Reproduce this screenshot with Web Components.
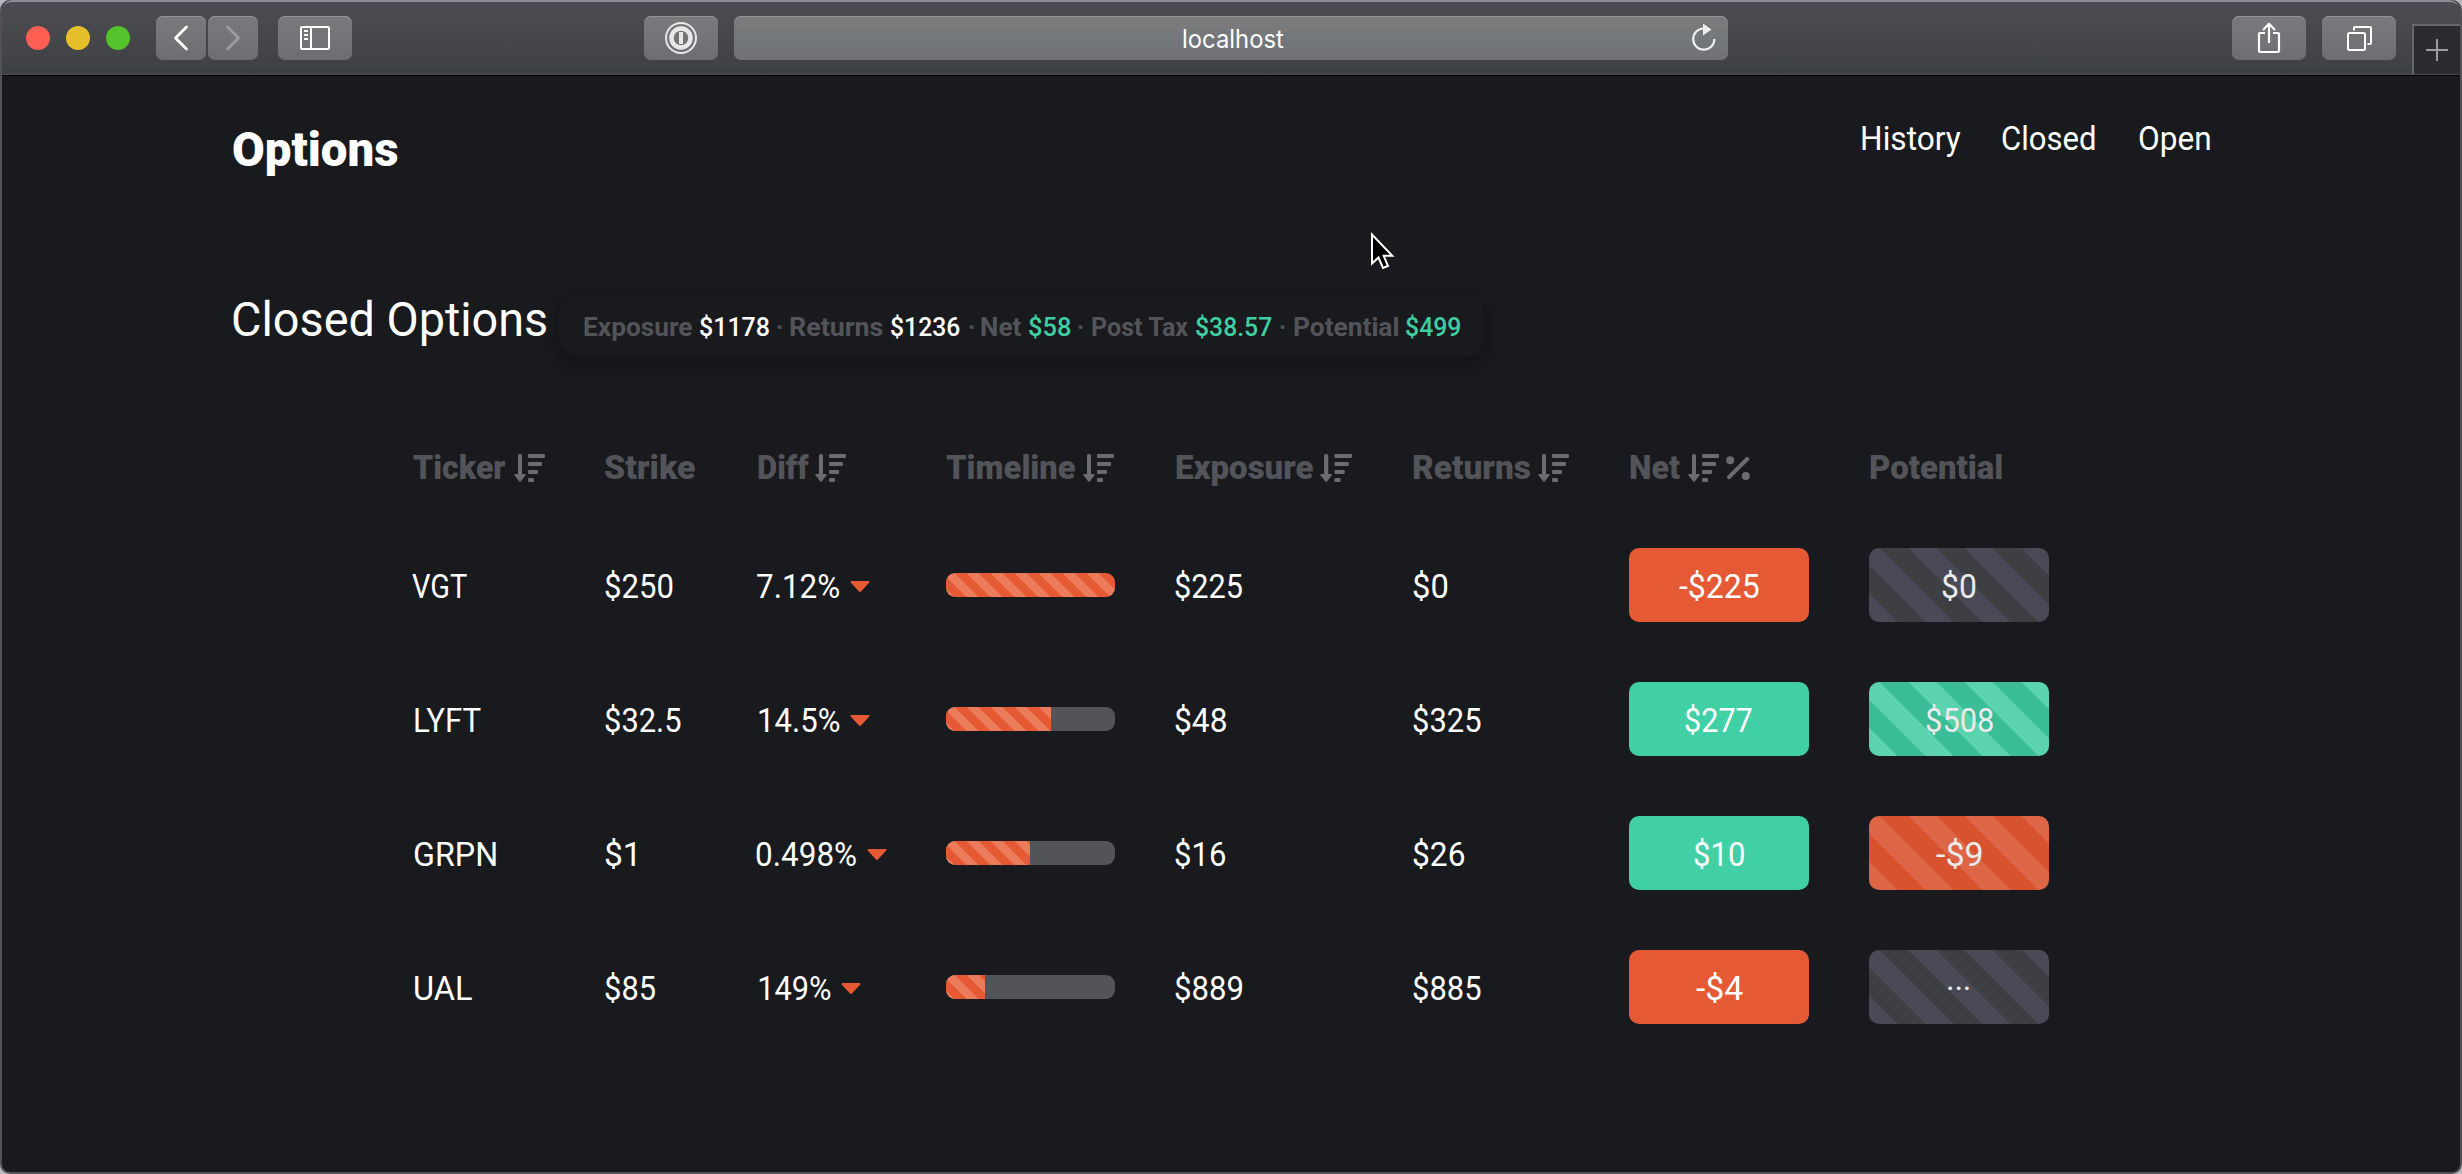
<!DOCTYPE html>
<html lang="en">
<head>
<meta charset="utf-8">
<title>Options</title>
<style>
html,body{margin:0;height:100%;background:#b9babd;overflow:hidden}
body{font-family:Roboto,"Liberation Sans",sans-serif;color:#fff}
</style>
</head>
<body>
<options-app></options-app>
<script>
const define = (name, css, html, setup) => customElements.define(name, class extends HTMLElement {
  connectedCallback() {
    if (this.shadowRoot) return;
    const root = this.attachShadow({ mode: 'open' });
    root.innerHTML = `<style>:host,*{box-sizing:border-box}${css}</style>${typeof html === 'function' ? html(this) : html}`;
    if (setup) setup(this, root);
  }
});

/* Text whose inked width is set by the "w" attribute. */
const pen = document.createElement('canvas').getContext('2d');
define('fit-text',
  `:host{display:block;flex:none;white-space:pre}
   span{display:inline-block;transform-origin:0 50%}`,
  '<span><slot></slot></span>',
  (el, root) => {
    const w = +el.getAttribute('w'), cs = getComputedStyle(el);
    pen.font = `${cs.fontWeight} ${cs.fontSize} ${cs.fontFamily}`;
    const m = pen.measureText(el.textContent);
    const k = w / (m.actualBoundingBoxRight + m.actualBoundingBoxLeft);
    el.style.width = w + 'px';
    root.querySelector('span').style.transform = `translateX(${m.actualBoundingBoxLeft * k}px) scaleX(${k})`;
  });
const t = (s, w, ml = 0, cls = '') => `<fit-text w="${w}" class="${cls}" style="margin-left:${ml}px">${s}</fit-text>`;

define('tool-button',
  `:host{display:flex;flex:none;align-items:center;justify-content:center;height:44px;border-radius:7px;
   background:linear-gradient(#77797b,#737578 50%,#6c6d71);box-shadow:inset 0 1px #929396}`,
  '<slot></slot>', el => { el.style.width = el.getAttribute('w') + 'px'; });

define('window-toolbar',
  `:host{display:flex;align-items:flex-start;height:76px;border-top:2px solid #8d8e91;border-bottom:1px solid #000;
     padding:14px 0 0 24px;background:linear-gradient(#4c4c54,#464749 50%,#3d4045 97%,#4a4c50);border-radius:10px 10px 0 0}
   svg{display:block;fill:none;stroke:#fff}
   .light{width:24px;height:24px;border-radius:50%;margin:10px 16px 0 0}
   .url{display:flex;align-items:center;flex:none;width:994px;height:44px;margin-left:16px;border-radius:7px;padding-top:2px;
     background:linear-gradient(#7b7c7d,#737679 60%,#717275);box-shadow:inset 0 1px #929396;
     font:400 25.5px/44px Inter,"Liberation Sans",sans-serif}
   .new{width:48px;height:50px;margin:8px 0 0 16px;background:#2b2c30;border:solid #65676a;border-width:2px 0 0 2px;display:flex;align-items:center;justify-content:center}`,
  `<div class="light" style="background:#ff5f52"></div><div class="light" style="background:#e6c02a"></div><div class="light" style="background:#54c22b;margin-right:26px"></div>
   <tool-button w="50"><svg width="16" height="26" viewBox="0 0 16 26" stroke-width="2.8" stroke-linecap="round" stroke-linejoin="round"><path d="M13.5 2 2.5 13 13.5 24"/></svg></tool-button>
   <tool-button w="50" style="margin-left:2px"><svg width="16" height="26" viewBox="0 0 16 26" stroke-width="2.8" stroke-linecap="round" stroke-linejoin="round" style="stroke:#9c9da0"><path d="M2.5 2 13.5 13 2.5 24"/></svg></tool-button>
   <tool-button w="74" style="margin-left:20px"><svg width="30" height="24" viewBox="0 0 30 24" stroke-width="2"><rect x="1" y="1" width="28" height="22" rx="1"/><path d="M11 1v22M4 5h4M4 9h4M4 13h4"/></svg></tool-button>
   <tool-button w="74" style="margin-left:292px"><svg width="34" height="34" viewBox="0 0 34 34" style="stroke:#e8e8e9"><circle cx="17" cy="17" r="15" stroke-width="2"/><circle cx="17" cy="17" r="9.5" stroke-width="4.5"/><path d="M17 11v12" stroke-width="4"/></svg></tool-button>
   <div class="url">${t('localhost', 100.5, 449)}
     <svg style="margin:-3px 0 0 407px" width="26" height="30" viewBox="0 0 26 30"><path d="M12.5 5.5A10.6 10.6 0 1 0 23.4 16" stroke="#eee" stroke-width="2.2"/><path d="M12 .5 20.5 6.5 12 12.5z" fill="#eee" stroke="none"/></svg></div>
   <tool-button w="74" style="margin-left:504px"><svg width="24" height="32" viewBox="0 0 24 32" stroke-width="2.2" stroke-linejoin="round"><path d="M8 11H3Q2 11 2 12V29Q2 30 3 30H21Q22 30 22 29V12Q22 11 21 11H16M12 21V2M6 8 12 1.8 18 8"/></svg></tool-button>
   <tool-button w="74" style="margin-left:16px"><svg width="26" height="26" viewBox="0 0 26 26" stroke-width="2"><rect x="2" y="8" width="17" height="17" rx="1.5"/><path d="M8 5.500V2.500Q8 2 9 2H24Q25 2 25 3V18Q25 19 24 19H21.500"/></svg></tool-button>
   <div class="new"><svg width="24" height="24" viewBox="0 0 24 24" stroke-width="2" style="stroke:#9c9da0"><path d="M12 1v22M1 12h22"/></svg></div>`);

define('page-header',
  `:host{display:flex;align-items:flex-start;height:215px;padding:45px 250.700px 0 232.500px}
   h1{margin:1px 0 0;font:900 48px/56px Roboto,sans-serif}
   nav{display:flex;margin-left:auto;font-size:33px;line-height:40px;margin-top:-2px}`,
  `<h1>${t('Options', 165)}</h1><nav>${t('History', 99)}${t('Closed', 93, 41)}${t('Open', 70.500, 43.500)}</nav>`);

define('summary-bar',
  `:host{display:flex;align-items:flex-start;height:163px;padding-left:233px}
   h2{margin:1px 0 0;font:400 48px/56px Roboto,sans-serif}
   .card{display:flex;width:925.500px;height:62px;margin:3px 0 0 12.500px;padding:4px 0 0 25.300px;border-radius:20px;
     font:700 26px/58px Roboto,sans-serif;color:#535459;box-shadow:0 8px 22px rgba(0,0,0,.32);background:#191a1e}
   .v{color:#fff;font-weight:500}.g{color:#3fcda2;font-weight:500}`,
  `<h2>${t('Closed Options', 313.500)}</h2><div class="card">${
    t('Exposure', 108.500) + t('$1178', 69.200, 7.600, 'v') + t('·', 4.500, 7.500) +
    t('Returns', 93, 8.500) + t('$1236', 68.500, 8, 'v') + t('·', 4.500, 9) +
    t('Net', 40.500, 8.300) + t('$58', 41.700, 7, 'g') + t('·', 4.500, 7.400) +
    t('Post Tax', 97.500, 9.200) + t('$38.57', 75.500, 7.200, 'g') + t('·', 4.500, 8.500) +
    t('Potential', 104.500, 9) + t('$499', 54.700, 7.300, 'g')}</div>`);

define('sort-icon',
  `:host{display:block;flex:none;fill:#6b6c70}svg{display:block}`,
  el => `<svg width="${el.getAttribute('w') || 31}" height="28" viewBox="0 0 31 28" preserveAspectRatio="none"><rect x="4" width="4" height="23" rx="1.5"/><path d="M1.200 20H10.800Q12.200 20 11.500 21.200L7 27.300Q6 28.300 5 27.300L.5 21.200Q-.2 20 1.200 20z"/><rect x="14" width="17" height="4" rx="1.200"/><rect x="14" y="8" width="14" height="4" rx="1.200"/><rect x="14" y="16" width="10" height="4" rx="1.200"/><rect x="14" y="24" width="6" height="4" rx="1.200"/></svg>`);

define('percent-icon',
  `:host{display:block;flex:none}svg{display:block}`,
  `<svg width="24" height="25" viewBox="0 0 24 25" fill="#6b6c70"><circle cx="4.200" cy="4.200" r="4"/><circle cx="19.800" cy="20" r="4"/><path d="M21.200 3 3 21.200" stroke="#6b6c70" stroke-width="4" stroke-linecap="round"/></svg>`);

define('time-bar',
  `:host{display:block;width:169px;height:24px;border-radius:9px;overflow:hidden;background:#535458}
   div{height:100%;background:linear-gradient(45deg,#ec7b5c 25%,#e55a34 25%,#e55a34 50%,#ec7b5c 50%,#ec7b5c 75%,#e55a34 75%) -3px 0/24px 24px}`,
  el => `<div style="width:${el.getAttribute('fill')}px"></div>`);

define('value-pill',
  `:host{display:flex;width:180px;height:74px;padding-top:3px;border-radius:10px;align-items:center;justify-content:center;background:#e55a34}
   :host([tone=up]){background:#41d0a5}
   :host([striped]){color:#ebebec;background:repeating-linear-gradient(45deg,var(--a) 0 20px,var(--b) 20px 40px)}
   :host([striped][tone=flat]){--a:#494a55;--b:#3d3f42}
   :host([striped][tone=up]){--a:#5bd3ae;--b:#3bbd97}
   :host([striped][tone=down]){--a:#dd6646;--b:#d7532f}`,
  '<slot></slot>');

define('options-table',
  `:host{display:block;padding-left:412px;font-size:33px;line-height:40px}
   .row{display:grid;grid-template-columns:192px 152px 190px 228px 238px 217px 240px 180px;height:134px;align-items:center}
   .head{height:64px;color:#535459;font-weight:900;align-items:start}
   .cell{display:flex;align-items:center}
   .row:not(.head) .cell{padding-top:3px}
   .head .cell{height:28px}
   .caret{display:block;flex:none}`,
  () => {
    const cell = s => `<div class="cell">${s}</div>`;
    const head = [
      t('Ticker', 93, .5) + '<sort-icon style="margin-left:8px"></sort-icon>',
      t('Strike', 90.500, .8),
      t('Diff', 50.500, 1.800) + '<sort-icon style="margin-left:7.200px"></sort-icon>',
      t('Timeline', 129.500, 0) + '<sort-icon style="margin-left:7px"></sort-icon>',
      t('Exposure', 137.500, 2) + '<sort-icon w="32" style="margin-left:6px"></sort-icon>',
      t('Returns', 117, 1) + '<sort-icon style="margin-left:7.500px"></sort-icon>',
      t('Net', 49.600, 1.300) + '<sort-icon style="margin-left:8px"></sort-icon><percent-icon style="margin-left:7px"></percent-icon>',
      t('Potential', 132.300, 1.300)
    ];
    const caret = '<svg class="caret" style="margin-left:10.500px" width="20" height="11" viewBox="0 0 20 11"><path fill="#e55a34" d="M1.500 0H18.500Q20 .3 19.300 1.600L11 10.500Q10 11.400 9 10.500L.7 1.600Q0 .3 1.500 0z"/></svg>';
    const rows = [
      [['VGT', 54.700, .3], ['$250', 67.500], ['7.12%', 82, 1.300], 169, ['$225', 67.500], ['$0', 34.300], ['-$225', 80.300, 'down'], ['$0', 33.400, 'flat']],
      [['LYFT', 65.500, 2.500], ['$32.5', 76], ['14.5%', 80.300, 3], 105, ['$48', 51], ['$325', 68], ['$277', 67.300, 'up'], ['$508', 67, 'up']],
      [['GRPN', 81.700, 1.500], ['$1', 30], ['0.498%', 100, .3], 84, ['$16', 50], ['$26', 51], ['$10', 50, 'up'], ['-$9', 46, 'down']],
      [['UAL', 56.700, 2.500], ['$85', 50.500], ['149%', 71.300, 3], 39, ['$889', 67.500], ['$885', 68], ['-$4', 46.700, 'down'], ['···', 21.700, 'flat']]
    ];
    return `<div class="row head">${head.map(cell).join('')}</div>` + rows.map(r => `<div class="row">${
      cell(t(...r[0])) + cell(t(r[1][0], r[1][1], 1.400)) + cell(t(...r[2]) + caret) +
      `<time-bar fill="${r[3]}"></time-bar>` +
      cell(t(r[4][0], r[4][1], 1)) + cell(t(r[5][0], r[5][1], .7)) +
      `<value-pill tone="${r[6][2]}">${t(r[6][0], r[6][1])}</value-pill>` +
      `<value-pill striped tone="${r[7][2]}">${t(r[7][0], r[7][1])}</value-pill>`}</div>`).join('');
  });

define('mouse-pointer',
  `:host{position:absolute;left:1368px;top:231px;display:block}svg{display:block;overflow:visible}`,
  `<svg width="25" height="40" viewBox="0 0 25 40"><path d="M2 3.500V32.500L8.500 26.500 13 37 18 35 13.700 24.800H22.300z" fill="#000" stroke="#fff" stroke-width="2" stroke-linejoin="miter"/></svg>`);

define('options-app',
  `:host{display:block;width:2462px;height:1174px;background:#181a1d;border:2px solid #505255;border-top:0;border-radius:10px;overflow:hidden;position:relative}
   .page{margin-left:-2px}`,
  `<window-toolbar></window-toolbar>
   <div class="page"><page-header></page-header><summary-bar></summary-bar><options-table></options-table></div>
   <mouse-pointer></mouse-pointer>`);
</script>
</body>
</html>
